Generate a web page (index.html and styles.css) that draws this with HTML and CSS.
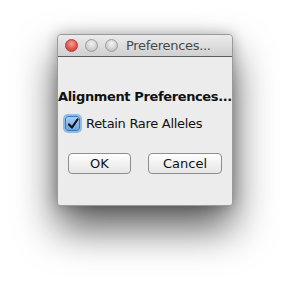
FILE: index.html
```html
<!DOCTYPE html>
<html lang="en">
<head>
    <meta charset="UTF-8">
    <title>Preferences...</title>
    <link rel="stylesheet" href="styles.css">
</head>
<body>
    <div class="window">
        <div class="titlebar">
            <div class="lights">
                <span class="light close"></span>
                <span class="light"></span>
                <span class="light"></span>
            </div>
            <div class="title">Preferences...</div>
        </div>
        <div class="content">
            <div class="heading">Alignment Preferences...</div>
            <label class="check-row">
                <span class="checkbox">
                    <svg width="12" height="12" viewBox="0 0 12 12">
                        <path d="M2 6.5 L5 9.5 L10.5 1.5" fill="none" stroke="#111" stroke-width="2.2" stroke-linecap="round" stroke-linejoin="round"/>
                    </svg>
                </span>
                <span class="check-label">Retain Rare Alleles</span>
            </label>
            <div class="buttons">
                <button class="btn ok">OK</button>
                <button class="btn cancel">Cancel</button>
            </div>
        </div>
    </div>
</body>
</html>
```

FILE: styles.css
```css
* {
    margin: 0;
    padding: 0;
    box-sizing: border-box;
}

body {
    background: #fff;
    font-family: "DejaVu Sans", sans-serif;
    display: flex;
    justify-content: center;
    padding-top: 34px;
    height: 285px;
    overflow: hidden;
}

.window {
    width: 176px;
    height: 172px;
    background: #ececec;
    border-radius: 4px 4px 3px 3px;
    border: 1px solid #9a9a9a;
    box-shadow: 0 22px 40px rgba(0, 0, 0, 0.65), 0 0 14px rgba(0, 0, 0, 0.25);
    display: flex;
    flex-direction: column;
}

.titlebar {
    height: 22px;
    display: flex;
    align-items: center;
    padding-left: 7px;
    background: linear-gradient(#ebebeb, #d0d0d0);
    border-bottom: 1px solid #5c5c5c;
    border-radius: 4px 4px 0 0;
}

.lights {
    display: flex;
    gap: 7px;
}

.light {
    width: 13px;
    height: 13px;
    border-radius: 50%;
    border: 1px solid #9c9c9c;
    background: radial-gradient(circle at 50% 35%, #f4f4f4, #c8c8c8 70%, #b5b5b5);
}

.light.close {
    border-color: #a8403a;
    background: radial-gradient(circle at 50% 35%, #f7a09a, #e0504a 60%, #b93c35);
}

.title {
    margin-left: 8px;
    font-size: 13px;
    color: #4a4a4a;
    letter-spacing: -0.3px;
}

.content {
    flex: 1;
    display: flex;
    flex-direction: column;
    padding-top: 32px;
}

.heading {
    font-size: 13px;
    font-weight: bold;
    color: #111;
    text-align: center;
    white-space: nowrap;
    letter-spacing: -0.37px;
}

.check-row {
    display: flex;
    align-items: center;
    margin-top: 12px;
    padding-left: 7px;
}

.checkbox {
    width: 15px;
    height: 15px;
    border-radius: 3px;
    border: 1px solid #3d78b8;
    background: linear-gradient(#a9cdf2, #6aa6e4);
    box-shadow: 0 0 0 2px rgba(100, 160, 225, 0.65);
    display: flex;
    justify-content: center;
    align-items: center;
}

.check-label {
    margin-left: 6px;
    font-size: 13px;
    color: #111;
    letter-spacing: -0.3px;
}

.buttons {
    display: flex;
    gap: 17px;
    margin-top: 22px;
    padding-left: 10px;
}

.btn {
    height: 21px;
    font-family: "DejaVu Sans", sans-serif;
    font-size: 13px;
    color: #111;
    border: 1px solid #8e8e8e;
    border-radius: 4px;
    background: linear-gradient(#ffffff, #f1f1f1 50%, #e6e6e6);
}

.ok {
    width: 63px;
}

.cancel {
    width: 74px;
}
```
